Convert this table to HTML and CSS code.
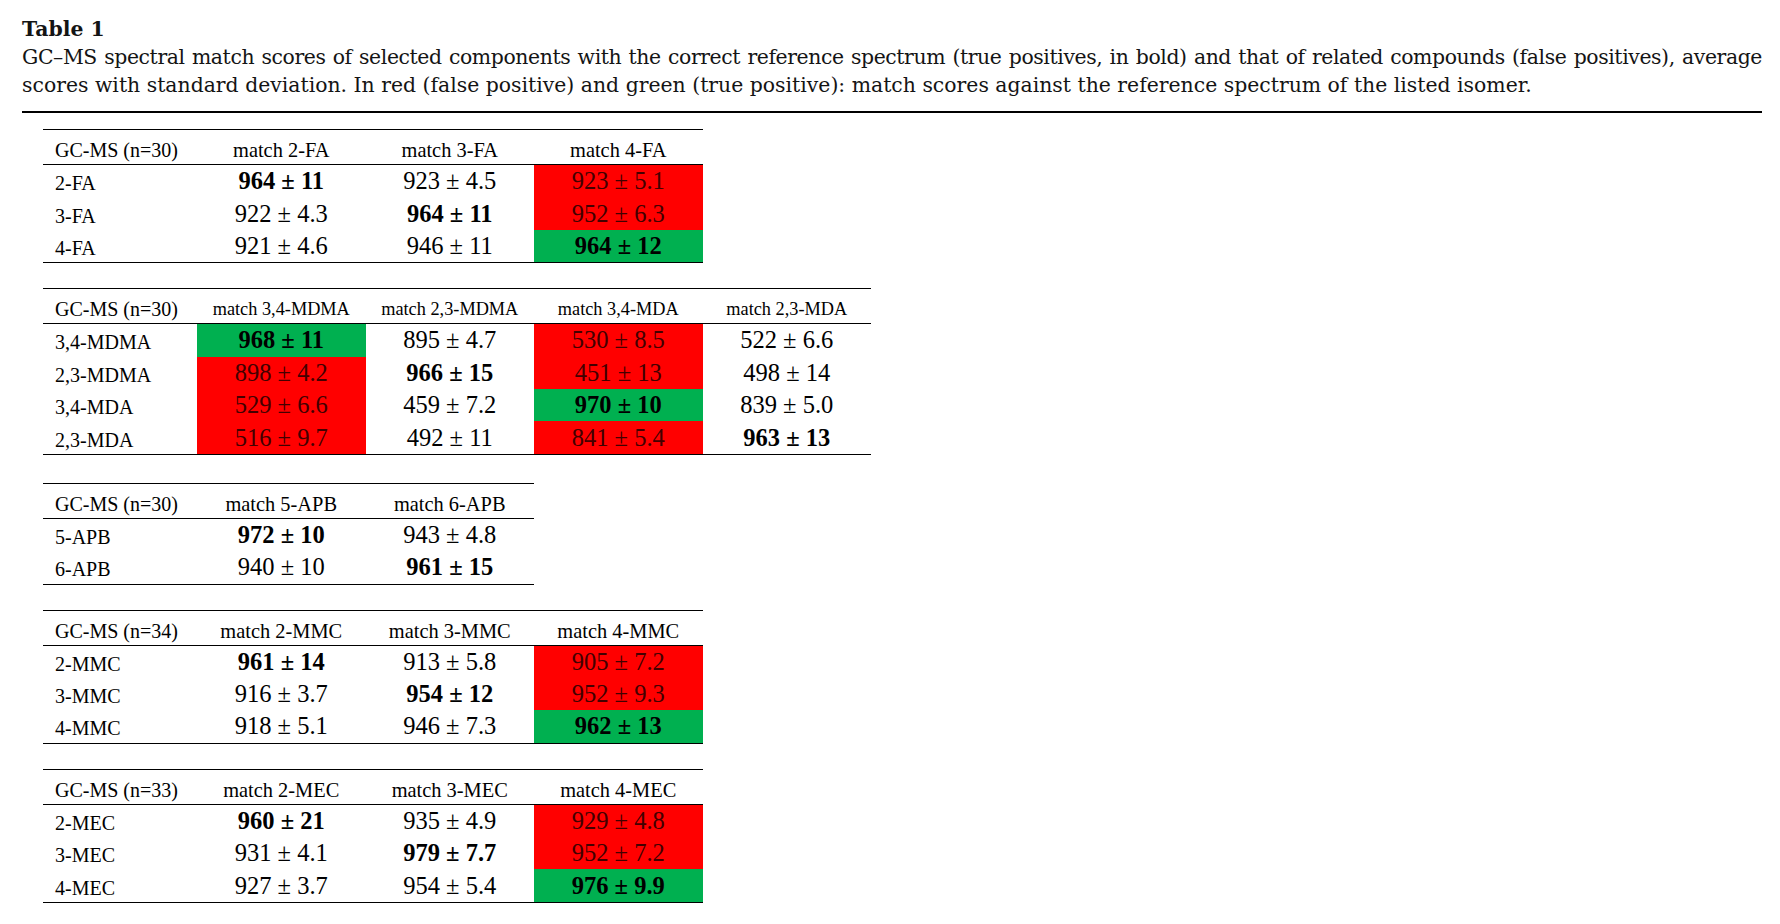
FILE: index.html
```html
<!DOCTYPE html>
<html lang="en">
<head>
<meta charset="utf-8">
<title>Table 1</title>
<link rel="stylesheet" href="styles.css">
</head>
<body>
<div class="page">
  <div class="caption">
    <div class="cap-title">Table 1</div>
    <div class="cap-line cap-just">GC–MS spectral match scores of selected components with the correct reference spectrum (true positives, in bold) and that of related compounds (false positives), average</div>
    <div class="cap-line">scores with standard deviation. In red (false positive) and green (true positive): match scores against the reference spectrum of the listed isomer.</div>
  </div>
  <div class="rule"></div>

  <div class="tables">
    <table class="gc">
      <thead><tr><th class="lbl">GC-MS (n=30)</th><th class="val">match 2-FA</th><th class="val">match 3-FA</th><th class="val">match 4-FA</th></tr></thead>
      <tbody>
        <tr><td class="lbl">2-FA</td><td class="b">964 ± 11</td><td>923 ± 4.5</td><td class="red">923 ± 5.1</td></tr>
        <tr><td class="lbl">3-FA</td><td>922 ± 4.3</td><td class="b">964 ± 11</td><td class="red">952 ± 6.3</td></tr>
        <tr><td class="lbl">4-FA</td><td>921 ± 4.6</td><td>946 ± 11</td><td class="green b">964 ± 12</td></tr>
      </tbody>
    </table>

    <table class="gc">
      <thead><tr><th class="lbl">GC-MS (n=30)</th><th class="val sm">match 3,4-MDMA</th><th class="val sm">match 2,3-MDMA</th><th class="val sm">match 3,4-MDA</th><th class="val sm">match 2,3-MDA</th></tr></thead>
      <tbody>
        <tr><td class="lbl">3,4-MDMA</td><td class="green b">968 ± 11</td><td>895 ± 4.7</td><td class="red">530 ± 8.5</td><td>522 ± 6.6</td></tr>
        <tr><td class="lbl">2,3-MDMA</td><td class="red">898 ± 4.2</td><td class="b">966 ± 15</td><td class="red">451 ± 13</td><td>498 ± 14</td></tr>
        <tr><td class="lbl">3,4-MDA</td><td class="red">529 ± 6.6</td><td>459 ± 7.2</td><td class="green b">970 ± 10</td><td>839 ± 5.0</td></tr>
        <tr><td class="lbl">2,3-MDA</td><td class="red">516 ± 9.7</td><td>492 ± 11</td><td class="red">841 ± 5.4</td><td class="b">963 ± 13</td></tr>
      </tbody>
    </table>

    <table class="gc gc-apb">
      <thead><tr><th class="lbl">GC-MS (n=30)</th><th class="val">match 5-APB</th><th class="val">match 6-APB</th></tr></thead>
      <tbody>
        <tr><td class="lbl">5-APB</td><td class="b">972 ± 10</td><td>943 ± 4.8</td></tr>
        <tr><td class="lbl">6-APB</td><td>940 ± 10</td><td class="b">961 ± 15</td></tr>
      </tbody>
    </table>

    <table class="gc">
      <thead><tr><th class="lbl">GC-MS (n=34)</th><th class="val">match 2-MMC</th><th class="val">match 3-MMC</th><th class="val">match 4-MMC</th></tr></thead>
      <tbody>
        <tr><td class="lbl">2-MMC</td><td class="b">961 ± 14</td><td>913 ± 5.8</td><td class="red">905 ± 7.2</td></tr>
        <tr><td class="lbl">3-MMC</td><td>916 ± 3.7</td><td class="b">954 ± 12</td><td class="red">952 ± 9.3</td></tr>
        <tr><td class="lbl">4-MMC</td><td>918 ± 5.1</td><td>946 ± 7.3</td><td class="green b">962 ± 13</td></tr>
      </tbody>
    </table>

    <table class="gc">
      <thead><tr><th class="lbl">GC-MS (n=33)</th><th class="val">match 2-MEC</th><th class="val">match 3-MEC</th><th class="val">match 4-MEC</th></tr></thead>
      <tbody>
        <tr><td class="lbl">2-MEC</td><td class="b">960 ± 21</td><td>935 ± 4.9</td><td class="red">929 ± 4.8</td></tr>
        <tr><td class="lbl">3-MEC</td><td>931 ± 4.1</td><td class="b">979 ± 7.7</td><td class="red">952 ± 7.2</td></tr>
        <tr><td class="lbl">4-MEC</td><td>927 ± 3.7</td><td>954 ± 5.4</td><td class="green b">976 ± 9.9</td></tr>
      </tbody>
    </table>
  </div>
</div>
</body>
</html>
```
FILE: styles.css
```css
html, body {
  margin: 0;
  padding: 0;
  background: #ffffff;
}

.page {
  padding: 15px 0 0 22px;
  width: 1740px;
}

.caption {
  font-family: "DejaVu Serif", "Liberation Serif", serif;
  font-size: 20.4px;
  line-height: 28px;
  color: #141414;
}

.cap-title {
  font-weight: bold;
}

.cap-line {
  white-space: nowrap;
}

.cap-just {
  text-align: justify;
  text-align-last: justify;
  letter-spacing: -0.4px;
  word-spacing: -1px;
}

.rule {
  height: 2px;
  background: #000;
  margin-top: 12px;
}

.tables {
  display: flex;
  flex-direction: column;
  align-items: flex-start;
  gap: 25px;
  margin: 16px 0 0 21px;
}

.gc {
  border-collapse: separate;
  border-spacing: 0;
  border-top: 1px solid #000;
  border-bottom: 1px solid #000;
  font-family: "Liberation Serif", "Times New Roman", serif;
  color: #000;
}

.gc-apb {
  margin-top: 3px;
}

.gc th {
  font-weight: normal;
  font-size: 20.4px;
  height: 35px;
  padding: 0 0 2px;
  border-bottom: 1px solid #000;
  vertical-align: bottom;
  box-sizing: border-box;
  text-align: center;
  white-space: nowrap;
}

.gc th.sm {
  font-size: 18.3px;
  padding-bottom: 3px;
}

.gc th.lbl {
  width: 154px;
  text-align: left;
  padding-left: 12px;
  font-size: 20px;
}

.gc th.val {
  width: 168.5px;
}

.gc tbody tr {
  height: 32.4px;
}

.gc td {
  padding: 0;
  font-size: 24.5px;
  text-align: center;
  vertical-align: middle;
  white-space: nowrap;
  line-height: 26px;
}

.gc td.lbl {
  font-size: 20px;
  text-align: left;
  padding-left: 12px;
  padding-top: 4px;
}

.gc td.b {
  font-weight: bold;
}

.gc td.red {
  background: #ff0000;
  color: #420000;
}

.gc td.green {
  background: #00b050;
  color: #000;
}
```
